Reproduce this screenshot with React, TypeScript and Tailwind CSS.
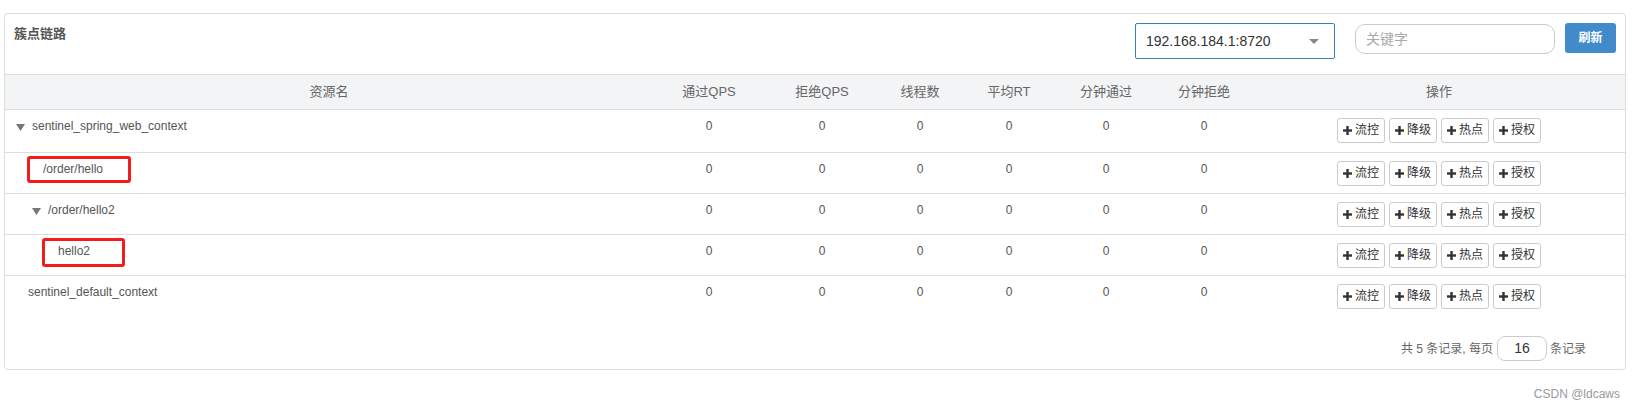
import React from "react";

const Tri = () => (
  <svg width="9" height="7" viewBox="0 0 9 7" className="shrink-0">
    <polygon points="0,0 9,0 4.5,7" fill="#777" />
  </svg>
);

const Plus = () => (
  <svg width="9" height="9" viewBox="0 0 9 9" className="shrink-0">
    <rect x="3.3" y="0" width="2.4" height="9" fill="#333" />
    <rect x="0" y="3.3" width="9" height="2.4" fill="#333" />
  </svg>
);

const ActionBtn = ({ label }: { label: string }) => (
  <div className="flex h-[25px] w-[48px] items-center justify-center gap-[3px] rounded-[3px] border border-[#ccc] bg-white text-[12px] text-[#333]">
    <Plus />
    <span>{label}</span>
  </div>
);

type Row = {
  name: string;
  tri?: boolean;
  pl: string;
  box?: "a" | "b";
};

const rows: Row[] = [
  { name: "sentinel_spring_web_context", tri: true, pl: "pl-[11px]" },
  { name: "/order/hello", pl: "pl-[38px]", box: "a" },
  { name: "/order/hello2", tri: true, pl: "pl-[27px]" },
  { name: "hello2", pl: "pl-[53px]", box: "b" },
  { name: "sentinel_default_context", pl: "pl-[23px]" },
];

const cols = "grid grid-cols-[648px_112px_114px_82px_96px_98px_98px_1fr]";

export default function App() {
  return (
    <div className="relative h-[408px] w-[1636px] overflow-hidden bg-white font-['Liberation_Sans','Noto_Sans_CJK_SC',sans-serif]">
      <div className="ml-[4px] mt-[13px] flex h-[357px] w-[1622px] flex-col rounded-[4px] border border-[#ddd] bg-white">
        {/* top bar */}
        <div className="flex h-[60px] items-start">
          <div className="flex-1 pl-[9px] pt-[11px] text-[13px] font-bold leading-[17px] text-[#555]">
            簇点链路
          </div>
          <div className="mt-[9px] flex h-[36px] w-[200px] items-center justify-between rounded-[2px] border border-[#3b7dc1] pl-[10px] pr-[15px] text-[14px] text-[#333]">
            <span>192.168.184.1:8720</span>
            <svg width="10" height="5" viewBox="0 0 10 5">
              <polygon points="0,0 10,0 5,5" fill="#888" />
            </svg>
          </div>
          <div className="ml-[20px] mt-[10px] flex h-[30px] w-[200px] items-center rounded-[10px] border border-[#ccc] pl-[10px] text-[14px] text-[#aaa]">
            关键字
          </div>
          <div className="ml-[10px] mr-[9px] mt-[9px] flex h-[30px] w-[51px] items-center justify-center rounded-[3px] bg-[#428bca] text-[12px] font-bold text-white">
            刷新
          </div>
        </div>

        {/* header */}
        <div className={`${cols} h-[36px] items-center border-y border-[#ddd] bg-[#f3f4f6] text-center text-[13px] text-[#666]`}>
          <div>资源名</div>
          <div>通过QPS</div>
          <div>拒绝QPS</div>
          <div>线程数</div>
          <div>平均RT</div>
          <div>分钟通过</div>
          <div>分钟拒绝</div>
          <div>操作</div>
        </div>

        {/* rows */}
        {rows.map((r, i) => (
          <div
            key={i}
            className={`${cols} ${i === 0 ? "h-[42px]" : i === 4 ? "h-[42px] border-t border-[#ddd]" : "h-[41px] border-t border-[#ddd]"} text-[12px] leading-[17px] text-[#555]`}
          >
            <div className={`relative flex items-start gap-[7px] pt-[8px] ${r.pl}`}>
              {r.tri && (
                <div className="pt-[6px]">
                  <Tri />
                </div>
              )}
              <span>{r.name}</span>
              {r.box === "a" && (
                <div className="absolute left-[22px] top-[3px] h-[27px] w-[104px] rounded-[3px] border-[3px] border-[#f21c1c]" />
              )}
              {r.box === "b" && (
                <div className="absolute left-[37px] top-[3px] h-[29px] w-[83px] rounded-[3px] border-[3px] border-[#f21c1c]" />
              )}
            </div>
            {[0, 1, 2, 3, 4, 5].map((k) => (
              <div key={k} className="pt-[8px] text-center">
                0
              </div>
            ))}
            <div className="flex justify-center gap-[4px] pt-[8px]">
              <ActionBtn label="流控" />
              <ActionBtn label="降级" />
              <ActionBtn label="热点" />
              <ActionBtn label="授权" />
            </div>
          </div>
        ))}

        {/* pagination */}
        <div className="flex flex-1 items-end justify-end pb-[8px] pr-[39px] text-[12px] text-[#666]">
          <div className="flex h-[25px] items-center">
            <span>共 5 条记录, 每页</span>
            <div className="ml-[4px] mr-[3px] flex h-[25px] w-[50px] items-center justify-center rounded-[8px] border border-[#ccc] text-[14px] text-[#333]">
              16
            </div>
            <span>条记录</span>
          </div>
        </div>
      </div>
      <div className="absolute bottom-[5px] right-[16px] text-[12px] text-[#999]">
        CSDN @ldcaws
      </div>
    </div>
  );
}
